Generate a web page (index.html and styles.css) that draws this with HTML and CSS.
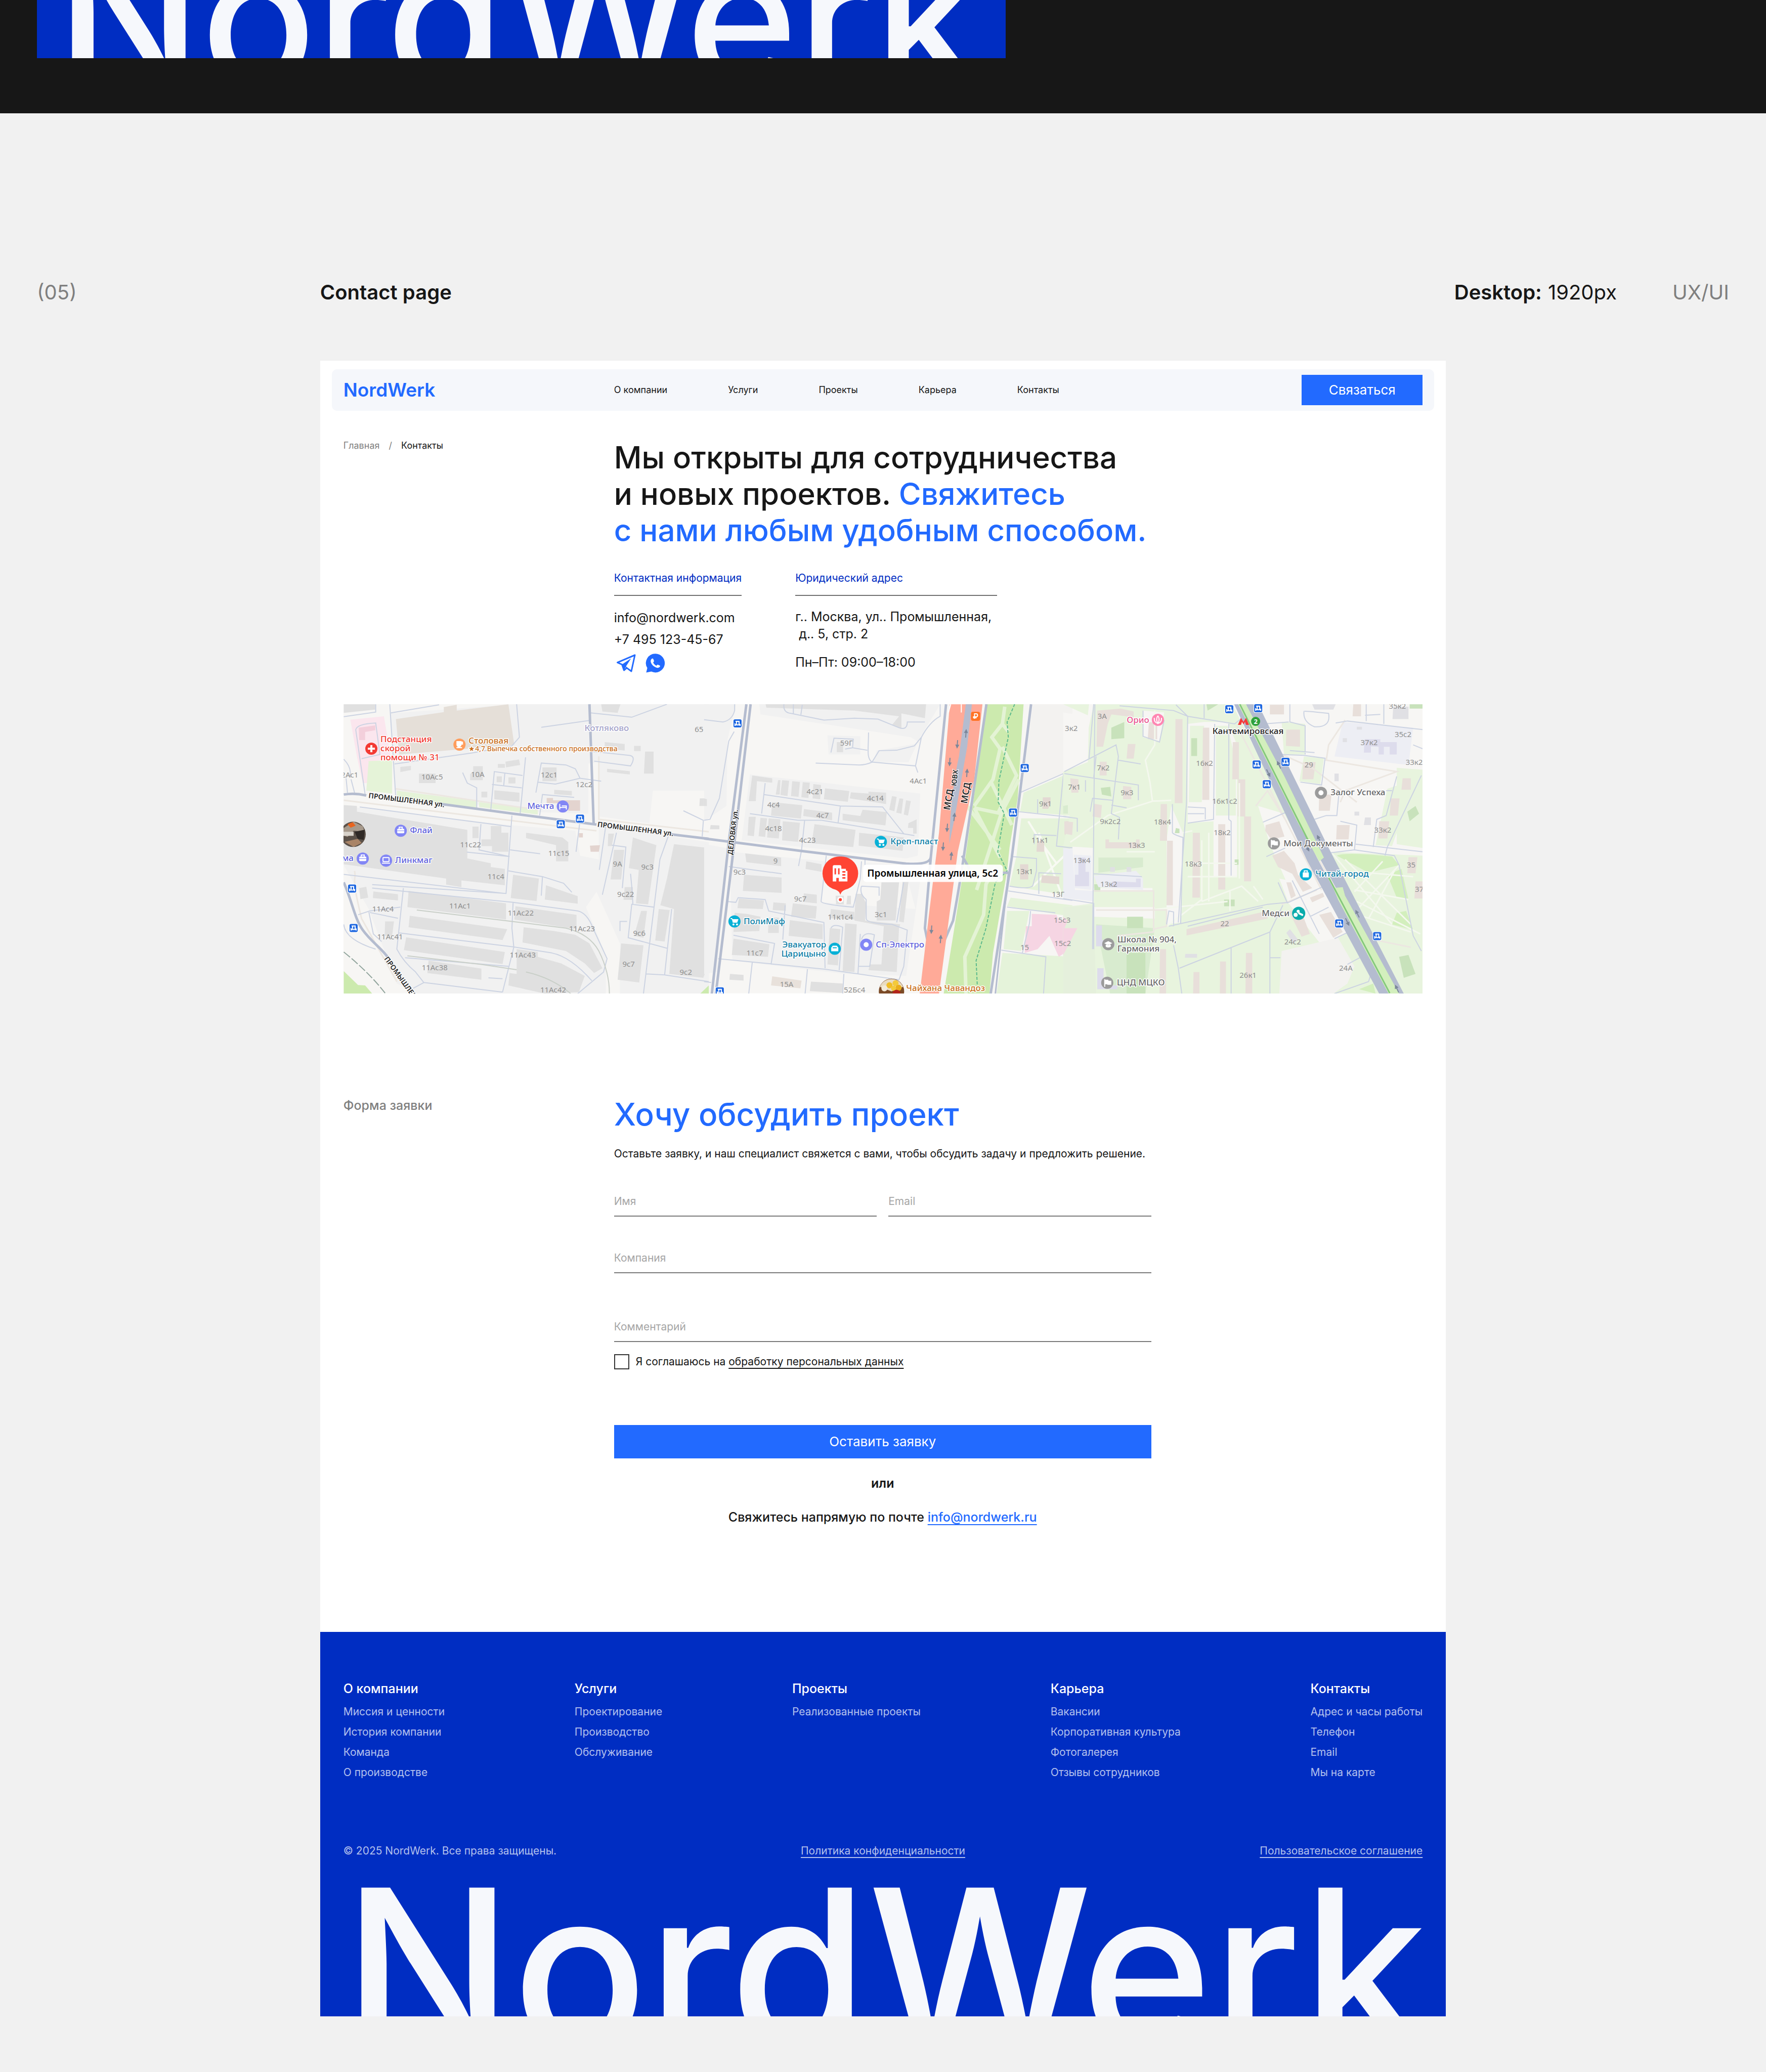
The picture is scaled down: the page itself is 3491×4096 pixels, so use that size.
FILE: index.html
```html
<!DOCTYPE html>
<html lang="ru">
<head>
<meta charset="utf-8">
<meta name="viewport" content="width=device-width, initial-scale=1">
<title>NordWerk — Contact page</title>
<link rel="stylesheet" href="styles.css">
</head>
<body>
<section class="band">
  <div class="band-block"><p class="band-word">NordWerk</p></div>
</section>

<section class="caption">
  <span class="muted">(05)</span>
  <h2 class="caption-title">Contact page</h2>
  <p class="caption-size"><b>Desktop:</b><span>1920px</span></p>
  <span class="muted">UX/UI</span>
</section>

<div class="card">
  <header class="header">
    <a class="logo" href="#">NordWerk</a>
    <nav class="nav">
      <a href="#">О компании</a>
      <a href="#">Услуги</a>
      <a href="#">Проекты</a>
      <a href="#">Карьера</a>
      <a href="#">Контакты</a>
    </nav>
    <button class="header-button" type="button">Связаться</button>
  </header>

  <main class="main">
    <section class="split intro">
      <nav class="crumbs"><a href="#">Главная</a><span>/</span><b>Контакты</b></nav>
      <div>
        <h1 class="title">Мы открыты для сотрудничества<br>и новых проектов. <em>Свяжитесь<br>с нами любым удобным способом.</em></h1>
        <div class="details">
          <div class="detail">
            <h3 class="detail-title">Контактная информация</h3>
            <div class="contacts">
              <a href="mailto:info@nordwerk.com">info@nordwerk.com</a>
              <a href="tel:+74951234567">+7 495 123-45-67</a>
            </div>
            <div class="socials">
              <a href="#" aria-label="Telegram"><svg viewBox="0 0 48 38" width="48" height="38"><path d="M41 3 6.500 17.700 15.500 21.600 19.500 33 25 28.400 34 35Z" fill="none" stroke="#226aff" stroke-width="3" stroke-linejoin="round"/><path d="M15.500 21.600 33.500 9.500 23 26 19.500 33Z" fill="#226aff"/><path d="M22 25.500 26 29" stroke="#226aff" stroke-width="2"/></svg></a>
              <a href="#" aria-label="WhatsApp"><svg viewBox="0 0 42 38" width="42" height="38"><path d="M21.500 .2A18.600 18.600 0 1 1 13.500 35.600L3.400 37.600 5.600 28.600A18.600 18.600 0 0 1 21.500 .2Z" fill="#226aff"/><path d="M14.500 10.300c1.300-.9 2.400-.4 3 .8l1.200 3c.4 1.300-.2 2.200-1.600 3.300 1.500 3.200 3.600 5.300 6.700 6.500 1.300-1.700 2.100-2.100 3.200-1.700l3 1.300c1.100.6 1.200 1.500.4 2.600-2.100 2.500-4.800 2.500-8 1.200-4.700-2-7.800-5.100-9.500-9.200-1.200-3-.8-6 1.600-7.800Z" fill="#fff"/></svg></a>
            </div>
          </div>
          <div class="detail detail-wide">
            <h3 class="detail-title">Юридический адрес</h3>
            <p class="address">г.. Москва, ул.. Промышленная,<br>&nbsp;д.. 5, стр. 2</p>
            <p class="hours">Пн–Пт: 09:00–18:00</p>
          </div>
        </div>
      </div>
    </section>

    <svg class="map" viewBox="0 0 2131 571" role="img">
      <defs>
        <g id="stop"><rect x="-9" y="-9" width="18" height="18" rx="3" fill="#fff"/><rect x="-8" y="-8" width="16" height="16" rx="3" fill="#1e67e0"/><path d="M-4-4H4M-2-4V3M3-4V3M-5 3H5M-5 0V5M5 1V5" stroke="#fff" stroke-width="2" fill="none"/></g>
        <g id="case"><circle r="12" fill="#8286f5"/><rect x="-7" y="-4" width="14" height="9" rx="2" fill="#fff"/><path d="M-3-4V-7H3V-4" stroke="#fff" stroke-width="2" fill="none"/><path d="M-7 0H7" stroke="#8286f5"/></g>
        <g id="cart"><circle r="12" fill="#08b0d6"/><path d="M-8-6H-5L-3 2H5L7-4H-4Z" fill="#fff" stroke="#fff"/><circle cx="-2" cy="6" r="2" fill="#fff"/><circle cx="5" cy="6" r="2" fill="#fff"/></g>
        <g id="flag"><circle r="12" fill="#9b9b9b"/><path d="M-5 8V-7M-4-5H1L2-3H7V3H1L0 2H-4Z" fill="#fff" stroke="#fff" stroke-width="2"/></g>
        <g id="up"><path d="M0 8V-3" stroke="#7c879a" stroke-width="2"/><path d="M0-9 4-1H-4Z" fill="#7c879a"/></g>
      </defs>
      <rect width="2131" height="571" fill="#f7f6f4"/>

      <!-- west: industrial estate -->
      <g class="geo" transform="matrix(.4638 0 0 .3769 -6 -10)">
        <path fill="#f1f1f1" d="M210 75 750 27H1568V480L1330 480 1315 650 1100 615V330L230 480ZM14 560 720 660 1000 690 1020 820 1100 840V660L1568 750V1545H1190V1280L1090 1010 1045 1090 1130 1340V1545H330L240 1490 120 1100 14 870ZM800 27H1055V600L760 590 230 480 235 340 750 260Z"/>
        <path fill="#fbe6ee" d="M42 108 185 90 215 310 120 330 130 440 95 440 70 300Z"/>
        <path fill="#f3cfdb" d="M78 150 148 138V163L105 172V215H80Z"/>
        <path fill="#e5dfd8" d="M236 105 440 68V42L495 30V60L715 27 740 240 250 290Z"/>
        <path fill="#e5f3d8" d="M120 325 220 320V495L110 480ZM240 480 580 535V570L240 515ZM590 540 840 580V605L590 565Z"/>
        <path fill="#cceaae" d="M14 1425 75 1498 105 1500 135 1543H14ZM1530 1545 1568 1500V1545Z"/>
        <path fill="#e3d4cf" d="M878 518H905V530H1020V585H970V545H878ZM1015 702H1032V725H1015ZM1062 768 1105 765 1100 800H1065Z"/>
        <path fill="#e0e0e0" d="M14 27H148V55L14 72ZM14 555 70 560V590L540 685V835L640 860V880L700 890V975L515 950V985L450 972V940L14 865ZM640 665H685V700H715V800H645V770H600V735H640ZM562 668H588V728H562ZM790 700 945 725 970 750V850H918V765L790 728ZM334 390H405V440H334ZM255 355 300 350V372L255 382ZM565 352H606V425H552V390H565ZM670 340H700V360H670ZM702 328 760 316 765 345 705 358ZM860 358H920V430H860ZM665 405H687V435H665ZM715 410H745V442H715ZM655 478 762 490V538L655 525ZM600 485H625V515H600ZM910 475 985 482V505L910 498ZM1125 225 1210 235V270L1125 260ZM1250 245H1278V272H1250ZM1297 275H1333V390H1292ZM1135 365 1232 378V395L1135 382ZM1110 27H1192L1180 72 1115 65ZM1530 520H1562V560H1528Z"/>
        <path fill="#e0e0e0" d="M80 990 110 983 118 1040 85 1048ZM140 1008 245 1022V1055L138 1042ZM290 1005 705 1070V1155L285 1090ZM735 920 845 940 835 1058 725 1042ZM875 975 1010 1032V1072L870 1050ZM745 1085 1005 1130V1205L740 1155ZM295 1135 710 1205 690 1262 290 1195ZM780 1195 910 1215 1000 1235 1060 1280 1115 1410 1080 1435 1040 1385 960 1320 775 1275ZM280 1248 700 1325 690 1388 270 1315ZM375 1370 600 1412V1470L370 1435ZM750 1310 840 1325V1350L940 1385 1040 1450 1015 1535 870 1543 715 1500 720 1435 750 1440ZM190 1165H228L220 1240H188ZM1165 790H1208L1195 945H1150ZM1245 725 1345 765 1310 1075 1258 1070 1270 895 1228 885ZM1420 760 1568 780V1380L1545 1460 1400 1440 1420 1100 1362 1080 1390 940ZM1355 1100 1402 1105 1380 1270 1340 1265ZM1280 1110H1305L1290 1250 1250 1240ZM1195 1280 1290 1290 1272 1485 1180 1470ZM1210 985H1245V1052H1205ZM1140 705H1165L1155 770H1138Z"/>
        <path stroke="#ece7e1" stroke-width="3" d="M14 530 1090 690M60 900C70 960 40 900 90 1150L240 1480M1100 300V630L1568 695M235 470 840 580"/>
        <path stroke="#ccd3e2" stroke-width="2" d="M14 92 150 68V27M210 27 235 505M215 72 420 30M105 500 65 160Q70 130 150 125L168 290 90 312M230 340 560 282M560 282 730 245 762 200 750 27M24 415 30 490M45 420 60 490M14 315Q50 360 40 410M520 385 540 440 580 465V575M640 580 655 380 775 400M645 447 772 465M788 305 765 600M700 385 695 455M832 490 855 335 960 345 1000 365 1020 415 915 445 840 435M1020 415 1110 430M848 610 860 500 995 515M855 148 1060 112M1065 72 1240 95 1390 27M1080 325 1235 350Q1260 300 1230 295L1075 275M82 565 725 668M730 610 705 1018 135 972M14 918 700 1018M598 655 590 790 720 825 538 802M722 790 850 810M715 900 860 930 950 965 985 1012M860 930 855 1030M135 990 735 1065 1010 1110Q1050 1120 1075 1200L1135 1360 1120 1430 1010 1543M735 1065 730 1200 738 1300 690 1535M250 1225 735 1298 900 1330Q980 1350 1070 1475M268 990 240 1310Q270 1380 320 1430L355 1485 310 1515M355 1485 690 1535M75 1130 125 1110 255 1090M120 1110 140 1230 175 1270M125 1118 245 1148M1018 655 1003 800M1130 660 1102 895M1175 700 1115 1025M1155 765 1215 775 1200 990M1395 720 1360 840 1335 1090 1240 1075 1225 1250 1390 1305M1245 1075 1240 980 1235 915M1335 1090 1290 1543M1300 1440 1380 1445 1410 1100M1380 1445 1568 1480M1460 585 1545 635 1540 720M630 1460 690 1465M275 1355 715 1400M14 1180Q20 1260 150 1310M1190 1215V1165H1220"/>
        <path stroke="#b4bccf" stroke-width="5" d="M14 500Q60 490 110 505M430 550 765 605 1090 657M1405 708 1568 732M1060 27 1078 655M14 960C50 1060 60 1150 95 1210 130 1270 170 1300 200 1350"/>
        <path stroke="#c9cfc8" stroke-width="2" d="M325 1105 730 1165 960 1200Q1060 1230 1100 1320 1145 1430 1145 1543M285 1345 600 1390 750 1418M790 1430Q900 1460 980 1543"/>
        <path stroke="#8fa39b" stroke-width="2" stroke-dasharray="16 4" d="M14 1325Q120 1430 190 1540"/>
      </g>

      <!-- centre: motorway and park strip -->
      <g class="geo" transform="matrix(.4638 0 0 .3769 712 -10)">
        <path fill="#f1f1f1" d="M0 27H135L100 210 95 560 0 640ZM235 27H1005L920 200 870 330 720 330 735 270 920 230 880 200 240 80ZM525 190 665 195V290H530ZM195 395 920 495 910 820 860 835 160 740ZM110 800 520 850 500 1065 900 1100 870 960 680 940 690 860 930 870 860 1450 600 1440 120 1370ZM0 760 95 780 55 1430 0 1440Z"/>
        <path fill="#e0e0e0" d="M262 27H945L940 100 840 75V155L800 135 830 90 640 60 265 45ZM565 225H592V278H565ZM205 400 290 415V438L225 430 220 535H190ZM315 425H325L322 500H305ZM332 425 362 428 355 508 325 502ZM375 430 408 434 402 512 370 508ZM420 435 450 438 444 518 414 514ZM465 445 498 450 494 525 462 520ZM515 468 618 482 612 538 510 525ZM625 488 700 495V485L775 490V550L620 520ZM800 508 820 512 810 588 788 580ZM832 520 848 522 840 600 818 595ZM860 530 880 535 868 610 850 605ZM290 540 418 556 412 626 285 610ZM425 576 545 595V635L422 612ZM590 600 665 612 675 580 778 592 772 662 590 635ZM190 617H220L212 718 185 714ZM240 622 268 625 260 722 232 718ZM275 625 325 630 318 730 268 725ZM335 640 408 648 400 748 332 740ZM470 655 645 685 635 775 458 755ZM660 700 850 725 845 795 658 768ZM870 650 905 630V705H890V675H868ZM175 808 328 830V875L180 855ZM170 920 330 935V1015L165 1005ZM435 850 500 865V905L432 890ZM148 1045 255 1055 250 1100 142 1095ZM295 1065 348 1070V1110L292 1105ZM378 1070 480 1085 475 1150 370 1140ZM425 1018 480 1025V1070L420 1062ZM365 1158 505 1180V1258L360 1240ZM130 1120 180 1125 240 1140 235 1215 125 1220ZM125 1255 278 1285 272 1350 118 1340ZM540 1100 640 1115V1155L535 1148ZM645 1020 670 1020 690 1070 685 1160 835 1180 830 1200 820 1430 700 1420 705 1390 755 1390 765 1190 640 1160ZM600 1175 650 1180 640 1430 590 1425ZM535 1200 580 1205 570 1395 525 1390ZM755 960H830L815 1160H735V1060L750 1050ZM845 955 870 958 850 1170 830 1165ZM275 1145H318V1225H272ZM110 1440 168 1445V1475L108 1470ZM560 1030H595V1075H562ZM610 1030H625V1075H606ZM455 1480 590 1490V1540L450 1530ZM0 520 12 525V560H0ZM28 660 65 662V682H25Z"/>
        <path fill="#e8e1db" d="M290 1452 415 1475 410 1515 285 1500Z"/>
        <path stroke="#ccd3e2" stroke-width="2" d="M0 108 80 120Q120 110 130 60V27M128 170 105 220 65 520 25 630 0 635M340 27Q335 70 370 75L510 110 640 100 740 105 830 150Q865 165 865 120L940 120M418 30 412 82M380 27V75M540 280 553 205 635 210 632 255 695 268M600 262 632 255M700 175C700 260 690 310 715 330L900 350 925 200Q960 120 1005 90V27M715 330 745 270 820 268 895 245 925 200M475 335 660 345Q690 345 715 330M900 350 910 385M245 600 260 440M255 500 580 560 760 565 850 705M195 600 400 635 500 635 895 715M580 560 570 650M428 635 415 790 402 875M105 877 330 915M520 820 498 1060Q500 1075 635 1090L665 940 670 850M685 840V870M670 980 745 985V1030M670 980Q660 1020 690 1050V1150Q690 1175 800 1180L865 1210 850 1400 830 1470M820 1170 850 960M97 1060 135 1065 145 1040 260 1050 275 1110 510 1170 515 1410M125 1237 300 1280 285 1390M345 1080 335 1260M540 1200Q550 1175 590 1195L575 1420M670 1260Q680 1215 725 1235L705 1400H655M655 1440 665 1230M60 1360 515 1415 830 1470M205 1380 190 1543M440 1415 430 1543M595 1440 590 1543M0 1480 30 1485"/>
        <path fill="#cceaae" d="M1200 27H1360L1335 520 1300 780 1290 900 1230 1330 1215 1543H1020L1060 1240 1110 850 1150 500Z"/>
        <path stroke="#e4f3d5" stroke-width="7" d="M1280 40 1270 130 1225 200 1260 260 1230 420 1150 560M1270 130 1295 170M1270 250 1330 400 1250 600M1150 570 1260 830M1220 430 1310 660M1340 420 1265 600 1150 570M1265 600 1160 1000M1240 880 1200 970 1190 1130 1110 1350 1115 1543M1120 560 1260 790"/>
        <path stroke="#5bb98c" stroke-width="2" stroke-dasharray="6 3" d="M1322 27 1290 120 1295 200 1255 430 1252 540 1278 600 1250 800 1290 900 1240 960 1200 1200 1158 1370 1163 1500"/>
        <path fill="#f3f2f0" d="M1400 27H1568V370L1350 490Z"/>
        <path fill="#e5f3da" d="M1360 490 1568 380V610L1345 590ZM1350 625H1568V1030L1300 980 1330 820ZM1305 1040 1568 1080V1140L1290 1085ZM1290 1110 1385 1110 1350 1320 1275 1310ZM1270 1330 1568 1350V1543H1245Z"/>
        <path stroke="#f8faf3" stroke-width="4" d="M1380 640 1440 760 1500 860M1400 980 1568 780M1425 700 1520 1020"/>
        <path fill="#f6d5e3" d="M1395 1125 1500 1130 1510 1160 1568 1150V1300L1510 1350 1470 1240 1420 1310 1365 1330 1370 1190H1395Z"/>
        <path fill="#e3d9d3" d="M1442 515H1475V545L1465 575H1440ZM1418 745H1448V800H1415ZM1345 865H1380V945H1345ZM1438 922 1512 930V970L1435 962ZM1540 640H1568V710H1535Z"/>
        <path stroke="#ccd3e2" stroke-width="2" d="M1345 490 1530 390 1568 360M1530 390 1500 770 1568 780M1420 600V525M1340 590 1568 620M1405 760V710L1500 715M1310 825 1415 835V900L1400 975Q1390 1000 1300 980M1425 1020V910L1520 915M1295 1005 1568 1055M1290 1090 1495 1120M1390 1110 1385 1175 1355 1330M1265 1315 1455 1350 1445 1543"/>
        <path stroke="#b4bccf" stroke-width="5" d="M180 27 105 750 33 1543M198 27 125 790 50 1543M0 730 410 795 860 862Q960 870 965 830M1030 27 965 830 940 1200 950 1260M1202 27 1105 830Q1090 960 1060 1160L1025 1260M1392 27 1310 830 1220 1543M1098 820 1130 890M1305 910H1268"/>
        <path stroke="#b4bccf" stroke-width="3" d="M1295 915 1240 1543"/>
        <path fill="#ffaa98" d="M1046 27H1185L1150 420 1080 800 1000 1543H918L960 1100 1000 700Z"/>
        <path fill="#b4bccf" d="M1114 27H1140L1120 250 1070 600 1044 760Q1048 500 1085 300Z"/>
        <path stroke="#fff" stroke-width="2" d="M1095 27V70M1050 27 1040 70"/>
      </g>

      <!-- east: residential blocks and avenue -->
      <g class="geo" transform="matrix(.4638 0 0 .3769 1421 -10)">
        <path fill="#e8f4de" d="M0 27H110L105 85ZM130 27H720L1300 1430 1350 1543H0V1090L130 1070V780L0 770ZM0 380 230 240 330 360V900H130V610H0ZM930 120 1030 130V290H940ZM1025 300 1110 310 1095 445 1005 430ZM1420 360 1530 370V780L1420 760ZM1380 470 1500 420 1400 770 1330 765ZM1120 800 1530 820V1543H1410Z"/>
        <path fill="#f7f6f4" d="M0 70 110 90 105 330 0 380ZM600 120 700 120 740 240 740 930 640 930V640L530 650V130ZM830 560 940 600 1130 1020 980 1040 880 760ZM920 940 1110 990 1220 1220 1100 1290 960 1070ZM130 1090H390V1150L130 1140ZM130 990H380V1010H130ZM340 60 430 70 410 220 340 200ZM460 560 510 700 500 1170 440 1180V740Z"/>
        <path fill="#e8f4de" d="M650 140H700L735 330V610H650ZM540 140H600L590 540H535Z"/>
        <path fill="#f3f2f0" d="M930 1320 1170 1250 1240 1400 1210 1490 1150 1543H920Z"/>
        <path fill="#e5f0dc" d="M0 1090 130 1080 140 1543H0Z"/>
        <path fill="#d8ebcf" d="M150 830 340 830V880L150 910ZM140 1180 390 1200 350 1543H200ZM0 560 20 555V600H0Z"/>
        <path fill="#c8e2bb" d="M545 205H570V298H545ZM272 1140H340V1200H272ZM205 150 260 120V205L205 210ZM160 465 200 460 205 510 165 500ZM270 1330H350V1543H270ZM132 970H158V1010H132ZM685 1050H730V1085H685ZM1430 1350 1470 1340 1500 1440 1450 1460ZM1465 590 1500 560 1515 600 1475 640ZM1475 27H1530V50H1475ZM610 27H660L615 60ZM480 675 495 680V702H475ZM730 840H752V868H730Z"/>
        <path fill="#edeef4" d="M0 780 40 785 50 1000 130 1005V1060L0 1040ZM45 815 120 820V1000L50 990ZM130 925 310 900 340 940V1000L150 985ZM1190 120 1490 150 1470 345 1155 300Z"/>
        <path fill="#dddcec" d="M65 830H95V905H110V980H50V920H65ZM210 955 310 960V940H330V985H200ZM140 1185H165V1260L220 1280V1295H140ZM145 1410H172V1500H230V1520H145ZM1283 210H1350V225H1420V290H1390V250H1365V290H1343V250L1310 248V280H1280Z"/>
        <path fill="#f6d5e3" d="M0 1140 20 1160 5 1200H60L0 1340Z"/>
        <path fill="#e8dfda" d="M478 105H508V545H475ZM595 150H622V528H592ZM722 225H748V420H720ZM745 420H775V615H743ZM770 615H800V955H770ZM660 655H690V998H660ZM552 700H582V1040H550ZM415 550H442V742H412ZM442 742H467V1080H440ZM145 60 245 50 300 65V95L205 80 190 130 170 250H142ZM365 120 400 125V210H360ZM275 235H308L300 312H270ZM155 328H185V400H155ZM30 415 65 420V490H35ZM255 455 290 460V525H255ZM130 548 165 555 160 622 125 615ZM5 640 42 645 38 712 5 705ZM180 735H195V750H310V735H325V782H180ZM525 1205 870 1110V1150L525 1238ZM412 1310H438V1543H410ZM555 1430H580V1543H553ZM668 1375H693V1543H667ZM778 1330H805V1543H776ZM950 160H1008V250L948 245ZM1022 330H1075L1065 420H1018ZM1090 500H1142L1135 585H1088ZM862 660 920 640 942 720 885 735 860 690ZM890 820 940 795 985 860 1000 920 1060 990 1020 1010 975 915 915 880ZM1090 1130 1140 1115 1190 1220 1150 1250ZM1165 660H1220L1215 735H1162ZM1345 640H1388L1380 730H1342ZM1395 520H1432L1425 610H1390ZM1445 415H1480V475H1440ZM1470 828H1508L1500 912H1465ZM1500 955H1530V1045H1495ZM960 1110 1010 1100 1050 1230 1015 1245ZM1050 1040 1105 1015 1112 1035 1060 1065ZM950 960H970L990 1030 970 1045ZM1235 27H1268V90H1232ZM880 30H940V80H880Z"/>
        <path fill="#e0e0e4" d="M1060 27H1160L1150 55H1070ZM1405 40H1470V105H1402ZM1155 390H1173V430H1155ZM1285 620H1310V660H1280ZM1240 590H1260V610H1240ZM1190 205H1208V225H1190ZM1250 145H1272V160H1250ZM200 880H220V905H200ZM270 880H290V905H270ZM520 1335H570V1355H518ZM965 1205 1000 1260 980 1280 950 1225Z"/>
        <path fill="#d3efbd" d="M1165 820Q1200 800 1400 825L1430 870 1300 910ZM1380 920 1440 890 1470 1050 1420 1040ZM1420 1120 1460 1110 1490 1210 1400 1180ZM1260 1520 1320 1490 1330 1543Z"/>
        <path stroke="#f4f8ee" stroke-width="3" d="M30 750 190 610 380 535 370 440 350 320 390 240V60M380 535 460 530M270 800H390M330 1110 700 1060M590 1060 760 980 830 1060M710 1000V1110M810 980 850 1050M440 1190 590 1050M750 440V940M510 700 550 690M530 860H740M530 930H740M590 740V1060M620 700V1060M1140 800 1400 1180M1200 840 1480 1180M1430 870 1230 1130M1300 910 1490 930M1240 1000 1470 1050M1250 1060 1520 1230M1410 900 1300 1150M1360 850 1240 1010M1280 1140 1480 1220"/>
        <path stroke="#ece7e1" stroke-width="3" d="M130 1005H385V1220L230 1240M140 1105H440V1190L385 1205M1200 110 1130 240 1120 320 1420 380 1200 480 1180 540M930 290 1060 360 1250 540M740 140 1100 1000M1110 985 1400 1543M820 560 870 480 950 640M1060 780 1280 1250 1480 1300M930 1075 1080 1000"/>
        <path stroke="#ccd3e2" stroke-width="2" d="M130 27 110 310M240 35 470 60 530 90 730 130 760 100M530 90 525 540 490 1170M340 60V195L410 225 430 110M5 380 225 240 235 300 205 600 240 620 235 735M140 300 130 410M5 390 320 450V530M235 320 330 340M95 425V485M115 590 125 520 210 530M205 555 270 570M0 615 60 625V695M465 550V700Q470 710 510 725L500 1175M645 130 640 630 530 650M705 130V630L715 640V925M530 565 605 570V630M530 600H600M130 915 335 930M0 1045 130 1070V1310M135 27 125 1310M440 1180 450 1110 470 1115V1190M450 1190 870 1075 960 1065 1110 980M530 1190 850 1090M495 1410 880 1220 935 1080M470 1290 490 1410 505 1543M715 1300V1543M880 1220V1543M880 1355H925M480 30 530 90M600 27V100M855 130 960 120M965 27V120L1030 140V290M1025 65Q1020 60 1130 75 1140 150 1070 145 1020 120 1025 65M1160 125 1210 115 1530 160M1290 27V115M1365 27V130M1285 85 1350 80M925 290 1025 295 1115 310 1100 450 1010 435M1070 630 1120 610 1165 610 1175 480M965 270 1070 280M850 645 945 595M865 825 945 780M915 960 955 1070M975 950 1090 1230M1050 1140 1130 1090M1140 805 1240 790 1410 820 1430 870 1490 1240 1525 1320M1240 790 1250 660 1180 640M1245 760 1530 800M1420 405 1375 610 1335 630 1320 775M1525 400 1380 775 1370 820M1155 1255 1215 1220M1210 1390 1270 1350M1155 1543 1300 1480 1310 1440M1490 240 1530 260M1400 480H1375"/>
        <path fill="#b4bccf" d="M728 27H760L1080 830 1390 1543H1345L1040 850Z"/>
        <path fill="#b4bccf" d="M778 27H830L1130 780 1450 1543H1410L1090 830Z"/>
        <path fill="#d3efbd" d="M745 27H778L940 400 1110 830 1090 850 1000 650ZM1150 990 1190 985 1200 1030 1430 1543H1385L1170 1050Z"/>
        <path stroke="#84c87c" stroke-width="3" d="M752 27 1055 770M1130 935 1390 1540"/>
      </g>

      <g class="arrows">
        <use href="#up" transform="translate(1229 58) rotate(4)"/><use href="#up" transform="translate(1231 136) rotate(4)"/><use href="#up" transform="translate(1206 223) rotate(6)"/><use href="#up" transform="translate(1200 300) rotate(6)"/><use href="#up" transform="translate(1179 464) rotate(4)"/>
        <use href="#up" transform="translate(1212 79) rotate(184)"/><use href="#up" transform="translate(1197 114) rotate(184)"/><use href="#up" transform="translate(1192 244) rotate(184)"/><use href="#up" transform="translate(1184 281) rotate(184)"/><use href="#up" transform="translate(1161 445) rotate(184)"/>
        <use href="#up" transform="translate(1847 120) rotate(-26)"/><use href="#up" transform="translate(1926 266) rotate(-26)"/><use href="#up" transform="translate(2002 414) rotate(-26)"/><use href="#up" transform="translate(2080 562) rotate(-26)"/>
        <use href="#up" transform="translate(1826 136) rotate(154)"/><use href="#up" transform="translate(1903 283) rotate(154)"/><use href="#up" transform="translate(1982 430) rotate(154)"/>
      </g>

      <g class="num">
        <text x="8" y="145">12Ас1</text><text x="175" y="149">10Ас5</text><text x="265" y="144">10А</text><text x="406" y="145">12с1</text><text x="475" y="164">12с2</text><text x="702" y="55">65</text><text x="251" y="283">11с22</text><text x="425" y="300">11с15</text><text x="541" y="321">9А</text><text x="600" y="327">9с3</text><text x="301" y="346">11с4</text><text x="557" y="381">9с22</text><text x="78" y="410">11Ас4</text><text x="230" y="404">11Ас1</text><text x="350" y="418">11Ас22</text><text x="471" y="448">11Ас23</text><text x="92" y="464">11Ас41</text><text x="584" y="457">9с6</text><text x="354" y="500">11Ас43</text><text x="180" y="525">11Ас38</text><text x="563" y="518">9с7</text><text x="676" y="534">9с2</text><text x="414" y="569">11Ас42</text>
        <text x="993" y="82">59Г</text><text x="1135" y="157">4Ас1</text><text x="931" y="178">4с21</text><text x="1050" y="191">4с14</text><text x="849" y="204">4с4</text><text x="946" y="225">4с7</text><text x="849" y="251">4с18</text><text x="916" y="274">4с23</text><text x="853" y="315">9</text><text x="782" y="337">9с3</text><text x="902" y="390">9с7</text><text x="981" y="425">11к1с4</text><text x="1061" y="421">3с1</text><text x="812" y="496">11с7</text><text x="875" y="558">15А</text><text x="1009" y="569">52Бс4</text><text x="1386" y="202">9к1</text><text x="1375" y="274">11к1</text><text x="1345" y="336">13к1</text><text x="1411" y="381">13Г</text><text x="1419" y="431">15с3</text><text x="1420" y="477">15с2</text><text x="1345" y="485">15</text>
        <text x="1498" y="29">3А</text><text x="1437" y="53">3к2</text><text x="1500" y="131">7к2</text><text x="1443" y="169">7к1</text><text x="1547" y="180">9к3</text><text x="1514" y="237">9к2с2</text><text x="1617" y="238">18к4</text><text x="1700" y="122">16к2</text><text x="1740" y="197">16к1с2</text><text x="1735" y="259">18к2</text><text x="1678" y="321">18к3</text><text x="1566" y="284">13к3</text><text x="1458" y="314">13к4</text><text x="1511" y="361">13к2</text><text x="1740" y="438">22</text><text x="1874" y="474">24с2</text><text x="1979" y="526">24А</text><text x="1786" y="540">26к1</text><text x="1906" y="125">29</text><text x="2081" y="9">35к2</text><text x="2092" y="65">35с2</text><text x="2025" y="81">37к2</text><text x="2114" y="120">33к2</text><text x="2052" y="254">33к2</text><text x="2108" y="323">35</text><text x="2124" y="371">37</text>
      </g>

      <g class="street">
        <text transform="translate(49 185) rotate(7)">ПРОМЫШЛЕННАЯ ул.</text>
        <text transform="translate(501 242) rotate(7)">ПРОМЫШЛЕННАЯ ул.</text>
        <text transform="translate(80 503) rotate(54)">ПРОМЫШЛЕННАЯ ул.</text>
        <text transform="translate(768 298) rotate(-83)">ДЕЛОВАЯ ул.</text>
        <text transform="translate(1197 210) rotate(-80)" class="big">МСД</text>
        <text transform="translate(1210 162) rotate(-84)">ЮВХ</text>
        <text transform="translate(1231 197) rotate(-80)" class="big">МСД</text>
      </g>

      <g>
        <use href="#stop" x="467" y="226"/><use href="#stop" x="429" y="237"/><use href="#stop" x="17" y="364"/><use href="#stop" x="20" y="442"/><use href="#stop" x="778" y="38"/><use href="#stop" x="1345" y="126"/><use href="#stop" x="1322" y="214"/><use href="#stop" x="743" y="567"/><use href="#stop" x="1749" y="10"/><use href="#stop" x="1806" y="8"/><use href="#stop" x="1803" y="119"/><use href="#stop" x="1860" y="114"/><use href="#stop" x="1823" y="158"/><use href="#stop" x="1966" y="433"/><use href="#stop" x="2041" y="458"/>
        <rect x="1239" y="15" width="18" height="18" rx="4" fill="#ff7426"/><path d="M1246 29V19H1249A3 3 0 0 1 1249 25H1243M1243 27H1250" stroke="#fff" stroke-width="2" fill="none"/>
      </g>

      <g class="poi">
        <circle cx="55" cy="88" r="12" fill="#f33a34"/><path d="M55 81V95M48 88H62" stroke="#fff" stroke-width="4"/>
        <g fill="#f2382f"><text x="73" y="75">Подстанция</text><text x="73" y="93">скорой</text><text x="73" y="111">помощи № 31</text></g>
        <circle cx="229" cy="80" r="12" fill="#ff9d5c"/><path d="M224 74H232V80A3 3 0 0 1 224 80ZM232 75H235V79H232M223 86H234" fill="#fff" stroke="#fff" stroke-width="2"/>
        <g fill="#c9701c"><text x="247" y="78">Столовая</text><text x="247" y="93" class="small">★4,7 Выпечка собственного производства</text><text x="1111" y="566">Чайхана Чавандоз</text></g>
        <text x="476" y="53" fill="#a3a2c9">Котляково</text>
        <g fill="#5d60dc"><text x="416" y="207" text-anchor="end">Мечта</text><text x="131" y="255">Флай</text><text x="102" y="314">Линкмаг</text><text x="20" y="310" text-anchor="end">ма</text><text x="1051" y="480">Сп-Электро</text></g>
        <circle cx="433" cy="202" r="12" fill="#8286f5"/><path d="M427 197V208M427 204H440V208M431 201H440V204" stroke="#fff" stroke-width="2" fill="none"/>
        <use href="#case" x="113" y="250"/><use href="#case" x="38" y="305"/>
        <circle cx="84" cy="309" r="12" fill="#8286f5"/><rect x="78" y="303" width="12" height="8" rx="1" fill="none" stroke="#fff" stroke-width="2"/><path d="M76 314H92" stroke="#fff" stroke-width="2"/>
        <circle cx="1032" cy="475" r="12" fill="#8286f5"/><circle cx="1032" cy="475" r="5" fill="#fff"/>
        <g fill="#0b7da6"><text x="1080" y="277">Креп-пласт</text><text x="790" y="434">ПолиМаф</text><text x="953" y="480" text-anchor="end">Эвакуатор</text><text x="953" y="498" text-anchor="end">Царицыно</text><text x="1919" y="341">Читай-город</text></g>
        <use href="#cart" x="1061" y="272"/><use href="#cart" x="772" y="429"/>
        <circle cx="970" cy="483" r="12" fill="#08b0d6"/><path d="M963 488V481L966 477H974L977 481V488Z" fill="#fff"/><path d="M966 481H974" stroke="#08b0d6" stroke-width="2"/>
        <circle cx="1900" cy="336" r="12" fill="#08b0d6"/><rect x="1894" y="332" width="12" height="10" rx="1" fill="#fff"/><path d="M1897 332V329H1903V332" stroke="#fff" stroke-width="2" fill="none"/>
        <text x="1591" y="37" text-anchor="end" fill="#e8538f">Орио</text>
        <circle cx="1608" cy="31" r="12" fill="#ff86b2"/><path d="M1608 23Q1613 30 1608 38 1603 30 1608 23M1601 27Q1600 36 1608 38 1616 36 1615 27" fill="none" stroke="#fff" stroke-width="2"/>
        <path d="M1766 41 1772 27 1777 35 1782 27 1788 41H1782L1780 35 1777 40 1774 35 1772 41Z" fill="#f43a3a"/>
        <circle cx="1801" cy="34" r="9" fill="#2fa13c"/><text x="1801" y="39" text-anchor="middle" class="line-no">2</text>
        <text x="1786" y="59" text-anchor="middle" fill="#222">Кантемировская</text>
        <g fill="#666"><text x="1949" y="180">Залог Успеха</text><text x="1856" y="281">Мои Документы</text><text x="1868" y="419" text-anchor="end">Медси</text><text x="1528" y="470">Школа № 904,</text><text x="1528" y="488">Гармония</text><text x="1527" y="555">ЦНД МЦКО</text></g>
        <circle cx="1930" cy="175" r="12" fill="#9b9b9b"/><circle cx="1930" cy="175" r="5" fill="#fff"/>
        <use href="#flag" x="1837" y="275"/><use href="#flag" x="1508" y="550"/>
        <circle cx="1510" cy="474" r="12" fill="#9b9b9b"/><path d="M1502 472 1510 468 1518 472 1510 476ZM1505 475V479Q1510 482 1515 479V475" fill="#fff"/>
        <circle cx="1886" cy="413" r="13" fill="#0aabab"/><circle cx="1880" cy="416" r="4" fill="#fff"/><circle cx="1885" cy="409" r="3" fill="#fff"/><path d="M1887 413 1893 416" stroke="#fff" stroke-width="4" stroke-linecap="round"/>
      </g>

      <g>
        <circle cx="19" cy="257" r="25" fill="#5b5149"/><path d="M-2 246 20 232 38 241 42 252 20 250 8 262-4 258Z" fill="#a79a8c"/><path d="M8 237 18 233 24 240 14 244Z" fill="#e8641f"/><path d="M22 252 42 248 40 268 28 266Z" fill="#2f2926"/><path d="M2 272 28 266 36 274 20 282Z" fill="#a98467"/><rect x="0" y="252" width="20" height="8" fill="#d8d2ca"/>
        <circle cx="1082" cy="567" r="25" fill="#7b4a26"/><path d="M1059 558A25 25 0 0 1 1105 558L1082 567Z" fill="#e9dcc2"/><circle cx="1078" cy="555" r="6" fill="#f0bd27"/><circle cx="1090" cy="551" r="6" fill="#f4c93a"/><circle cx="1096" cy="560" r="6" fill="#e9ad1c"/><circle cx="1086" cy="561" r="5" fill="#f4c93a"/><path d="M1084 571A8 7 0 0 1 1100 571Z" fill="#b3251b"/><circle cx="1068" cy="561" r="6" fill="#f3ead7"/>
      </g>

      <rect x="1026" y="317" width="276" height="34" rx="6" fill="#fff" fill-opacity=".92"/>
      <text x="1034" y="341" class="pin-text">Промышленная улица, 5с2</text>
      <circle cx="981" cy="386" r="6" fill="#fff"/><circle cx="981" cy="386" r="3" fill="#f43"/>
      <path d="M981 301A33 33 0 0 1 991 366Q983 369 981 376 979 369 971 366A33 33 0 0 1 981 301Z" fill="#ff4433"/>
      <path d="M966 350V321Q966 318 969 318H980Q983 318 983 321V325H992V329H995V350H978V343H973V350Z" fill="#fff"/>
      <path d="M971 324V336M978 324V336M985 331H991M985 337H991M985 343H991" stroke="#ff4433" stroke-width="3" fill="none"/>
    </svg>

    <section class="split request">
      <h3 class="request-label">Форма заявки</h3>
      <form class="form">
        <h2 class="form-title">Хочу обсудить проект</h2>
        <p class="form-lead">Оставьте заявку, и наш специалист свяжется с вами, чтобы обсудить задачу и предложить решение.</p>
        <div class="field-row">
          <div class="field"><label for="name">Имя</label><input id="name" type="text"></div>
          <div class="field"><label for="email">Email</label><input id="email" type="email"></div>
        </div>
        <div class="field"><label for="company">Компания</label><input id="company" type="text"></div>
        <div class="field field-comment"><label for="comment">Комментарий</label><input id="comment" type="text"></div>
        <div class="consent">
          <input id="consent" type="checkbox">
          <label for="consent">Я соглашаюсь на <a href="#">обработку персональных данных</a></label>
        </div>
        <button class="submit" type="submit">Оставить заявку</button>
        <p class="or">или</p>
        <p class="direct">Свяжитесь напрямую по почте <a href="mailto:info@nordwerk.ru">info@nordwerk.ru</a></p>
      </form>
    </section>
  </main>

  <footer class="footer">
    <div class="footer-columns">
      <div class="footer-column"><h4>О компании</h4><a href="#">Миссия и ценности</a><a href="#">История компании</a><a href="#">Команда</a><a href="#">О производстве</a></div>
      <div class="footer-column"><h4>Услуги</h4><a href="#">Проектирование</a><a href="#">Производство</a><a href="#">Обслуживание</a></div>
      <div class="footer-column"><h4>Проекты</h4><a href="#">Реализованные проекты</a></div>
      <div class="footer-column"><h4>Карьера</h4><a href="#">Вакансии</a><a href="#">Корпоративная культура</a><a href="#">Фотогалерея</a><a href="#">Отзывы сотрудников</a></div>
      <div class="footer-column"><h4>Контакты</h4><a href="#">Адрес и часы работы</a><a href="#">Телефон</a><a href="#">Email</a><a href="#">Мы на карте</a></div>
    </div>
    <div class="legal">
      <span>© 2025 NordWerk. Все права защищены.</span>
      <a href="#">Политика конфиденциальности</a>
      <a href="#">Пользовательское соглашение</a>
    </div>
    <p class="footer-word">NordWerk</p>
  </footer>
</div>
</body>
</html>
```
FILE: styles.css
```css
:root {
  --gutter: 73px;
  --card-inset: 18.125vw;
  --side: 535px;
  --blue: #226aff;
  --deep: #002dc2;
  --ink: #161616;
  --small: 21px;
  --text: 25px;
}

* { box-sizing: border-box; }

body {
  margin: 0;
  background: #f1f1f1;
  color: var(--ink);
  font-family: Inter, "Liberation Sans", sans-serif;
  font-size: var(--text);
  line-height: 34px;
}

h1, h2, h3, h4, p { margin: 0; font-weight: 400; }
a { color: inherit; text-decoration: none; }
button, input { font: inherit; border: 0; border-radius: 0; padding: 0; }
button { font-size: 26px; }

/* tail of the previous, dark section */
.band { height: 224px; background: #171717; padding: 0 var(--gutter); }
.band-block { width: 57.25%; height: 115px; padding-left: 39px; overflow: hidden; background: var(--deep); }
.band-word { margin-top: -102px; color: #f6f8fc; font-size: 377px; line-height: 272px; font-weight: 500; white-space: nowrap; }

.caption {
  display: grid;
  grid-template-columns: calc(var(--card-inset) - var(--gutter)) 1fr auto auto;
  padding: 330px var(--gutter) 111px;
  font-size: 40px;
  line-height: 48px;
}
.caption-title { font-size: inherit; font-weight: 600; }
.caption-size { display: flex; gap: 12px; margin-right: 110px; }
.caption-size b { font-weight: 600; }
.muted { color: #7f7f7f; }

.card { margin: 0 var(--card-inset) 109px; background: #fff; padding-top: 17px; }

.header {
  display: grid;
  grid-template-columns: var(--side) 1fr auto;
  align-items: center;
  height: 82px;
  margin: 0 23px;
  padding: 0 23px;
  border-radius: 10px;
  background: #f5f7fb;
}
.logo { color: var(--blue); font-size: 37px; line-height: 46px; font-weight: 600; }
.nav { display: flex; gap: 120px; font-size: 18px; line-height: 26px; }
.header-button { width: 239px; height: 60px; background: var(--blue); color: #fff; }

.main { padding: 56px 46px 210px; }
.split { display: grid; grid-template-columns: var(--side) 1fr; }

.crumbs { display: flex; gap: 18px; font-size: 18px; line-height: 26px; color: #7f7f7f; }
.crumbs b { font-weight: 400; color: var(--ink); }

.title { font-size: 60px; line-height: 72px; font-weight: 500; }
.title em { font-style: normal; color: var(--blue); }

.details { display: flex; align-items: flex-start; gap: 106px; margin-top: 47px; }
.detail-wide { width: 399px; }
.detail-title { padding-bottom: 21px; border-bottom: 2px solid #707070; color: var(--deep); font-size: var(--small); line-height: 24px; }
.contacts { display: flex; flex-direction: column; margin-top: 22px; line-height: 43px; }
.socials { display: flex; gap: 12px; margin-top: 6px; }
.socials svg { display: block; }
.address { margin-top: 24px; white-space: nowrap; }
.hours { margin-top: 22px; }

.map { display: block; width: 100%; height: auto; margin-top: 62px; overflow: hidden; font-family: "Noto Sans", "Open Sans", sans-serif; }
.geo path { vector-effect: non-scaling-stroke; }
.geo path:not([fill]) { fill: none; }
.num { font-size: 15px; fill: #8e8e8e; text-anchor: middle; }
.street { font-size: 14px; font-weight: 600; fill: #222; stroke: #fff; stroke-width: 2px; paint-order: stroke; }
.street .big { font-size: 18px; }
.poi { font-size: 17px; font-weight: 500; }
.poi text { stroke: #fff; stroke-width: 3px; stroke-linejoin: round; paint-order: stroke; }
.poi .small { font-size: 14px; }
.poi .line-no { font-size: 13px; font-weight: 700; fill: #fff; stroke: none; }
.pin-text { font-size: 19px; font-weight: 600; fill: #000; }

.request { margin-top: 203px; }
.request-label { color: #7f7f7f; font-size: var(--text); line-height: 36px; font-weight: 500; }
.form { max-width: 1062px; }
.form-title { color: var(--blue); font-size: 62px; line-height: 72px; font-weight: 500; }
.form-lead { margin-top: 30px; font-size: var(--small); line-height: 24px; white-space: nowrap; }
.field-row { display: grid; grid-template-columns: 1fr 1fr; gap: 23px; }
.field { display: grid; margin-top: 70px; font-size: var(--small); line-height: 24px; }
.field label { grid-area: 1 / 1; color: #a6a6a6; }
.field input { grid-area: 1 / 1; width: 100%; height: 42px; padding-bottom: 16px; background: none; border-bottom: 2px solid #7a7a7a; }
.field-comment { margin-top: 94px; }
.consent { display: flex; align-items: center; gap: 13px; margin-top: 24px; font-size: var(--small); line-height: 30px; }
.consent input { appearance: none; width: 30px; height: 30px; margin: 0; border: 2px solid #333; }
.consent a, .direct a, .legal a { text-decoration: underline; text-decoration-thickness: 2px; text-underline-offset: 5px; text-decoration-skip-ink: none; }
.submit { width: 100%; height: 66px; margin-top: 110px; background: var(--blue); color: #fff; }
.or { margin-top: 32px; text-align: center; font-weight: 600; }
.direct { margin-top: 33px; text-align: center; font-weight: 500; }
.direct a { color: var(--blue); }

.footer { padding: 95px 46px 0; background: var(--deep); color: #b3c0ed; font-size: var(--small); line-height: 24px; }
.footer-columns { display: flex; justify-content: space-between; min-height: 195px; }
.footer-column { display: flex; flex-direction: column; gap: 16px; }
.footer-column h4 { color: #fff; font-size: var(--text); line-height: 35px; font-weight: 500; }
.legal { display: grid; grid-template-columns: 1fr auto 1fr; margin-top: 131px; }
.legal a:last-child { justify-self: end; }
.footer-word { height: 255px; margin-top: 60px; overflow: hidden; color: #f6f8fc; font-size: 442px; line-height: 324px; font-weight: 500; white-space: nowrap; }
```
